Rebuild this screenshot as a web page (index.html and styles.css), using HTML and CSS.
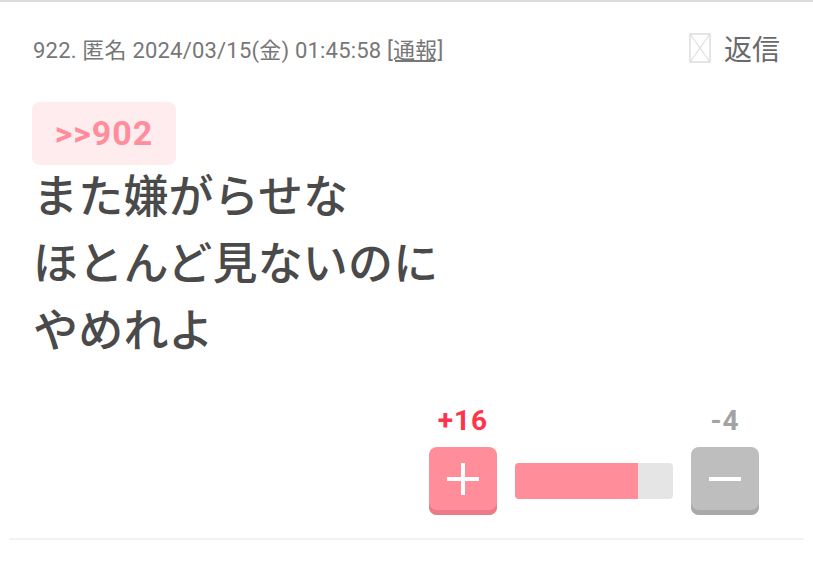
FILE: index.html
```html
<!DOCTYPE html>
<html lang="ja">
<head>
	<meta charset="UTF-8">
    <meta content="width=device-width, initial-scale=1.0" name="viewport">
	<title>922</title>
    <link rel="stylesheet" href="styles.css">
</head>
<body>
    <div class="res">
        <div class="res_head">
            <p class="meta">922. 匿名 2024/03/15(金) 01:45:58 <a class="report">[通報]</a></p>
            <a class="reply">
                <svg class="reply_icon" width="22" height="30" viewBox="0 0 22 30">
                    <rect x="1" y="1" width="20" height="28" fill="none" stroke="#ddd" stroke-width="1.5"/>
                    <path d="M1 1 L21 29 M21 1 L1 29" stroke="#ddd" stroke-width="1.2"/>
                </svg>
                返信
            </a>
        </div>

        <span class="anchor">&gt;&gt;902</span>
        <div class="body">また嫌がらせな<br>ほとんど見ないのに<br>やめれよ</div>

        <div class="vote">
            <div class="vote_col">
                <span class="count plus_count">+16</span>
                <div class="btn btn_plus"><span class="bar_h"></span><span class="bar_v"></span></div>
            </div>
            <div class="gauge"><span style="width: 78%"></span></div>
            <div class="vote_col">
                <span class="count minus_count">-4</span>
                <div class="btn btn_minus"><span class="bar_h"></span></div>
            </div>
        </div>
    </div>
</body>
</html>
```

FILE: styles.css
```css
*{margin: 0;padding: 0;box-sizing: border-box;}
body{font-family: Roboto, "Noto Sans CJK JP", sans-serif;background: #fff;border-top: 2px solid #dcdcdc;}
a{text-decoration: none;color: inherit;cursor: pointer;}

.res{margin: 0 9px;padding: 0 24px 23px 24px;border-bottom: 2px solid #f2f2f2;}

.res_head{display: flex;align-items: center;justify-content: space-between;height: 92px;}
.meta{font-size: 22px;color: #777;letter-spacing: 0.2px;}
.report{text-decoration: underline;}
.reply{display: flex;align-items: center;gap: 13px;font-size: 28px;color: #6a6a6a;font-family: "Noto Sans CJK JP", sans-serif;margin-right: 0;}
.reply_icon{display: block;}

.anchor{display: inline-block;margin-top: 8px;margin-left: -1px;width: 144px;height: 63px;line-height: 63px;text-align: center;background: #ffecee;color: #ff8d9b;font-size: 34px;font-weight: bold;letter-spacing: 1px;border-radius: 8px;}

.body{font-family: "Noto Sans CJK JP", sans-serif;font-size: 45px;font-weight: 500;line-height: 67px;color: #4a4a4a;margin-top: -5px;letter-spacing: 0.2px;}

.vote{display: flex;justify-content: flex-end;align-items: flex-end;gap: 18px;margin-top: 45px;padding-right: 21px;}
.vote_col{display: flex;flex-direction: column;align-items: center;}
.count{font-size: 28px;font-weight: bold;line-height: 30px;margin-bottom: 11px;letter-spacing: 1px;}
.plus_count{color: #ff3349;}
.minus_count{color: #a3a3a3;}

.btn{position: relative;width: 68px;height: 68px;border-radius: 8px;}
.btn_plus{background: #ff8e9a;box-shadow: inset 0 -5px 0 #e97c88;}
.btn_minus{background: #bebebe;box-shadow: inset 0 -5px 0 #a9a9a9;}
.bar_h{position: absolute;left: 18px;top: 30px;width: 32px;height: 4px;background: #fff;}
.bar_v{position: absolute;left: 32px;top: 16px;width: 4px;height: 32px;background: #fff;}

.gauge{width: 158px;height: 36px;margin-bottom: 16px;background: #e5e5e5;border-radius: 4px;overflow: hidden;}
.gauge span{display: block;height: 100%;background: #ff8e9a;}
```
